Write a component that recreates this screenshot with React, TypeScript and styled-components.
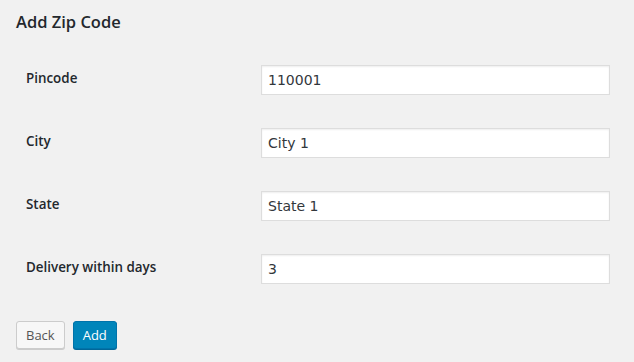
import React from 'react';
import styled, { createGlobalStyle } from 'styled-components';

const GlobalStyle = createGlobalStyle`
  html, body {
    margin: 0;
    background: #f1f1f1;
    font-family: 'Open Sans', 'DejaVu Sans', sans-serif;
    color: #23282d;
  }
`;

const fields = [
  { label: 'Pincode', value: '110001' },
  { label: 'City', value: 'City 1' },
  { label: 'State', value: 'State 1' },
  { label: 'Delivery within days', value: '3' },
];

export default function App() {
  return (
    <Wrap>
      <GlobalStyle />
      <Title>Add Zip Code</Title>
      <FormTable>
        {fields.map((f) => (
          <Row key={f.label}>
            <Label>{f.label}</Label>
            <Cell>
              <Input type='text' defaultValue={f.value} />
            </Cell>
          </Row>
        ))}
      </FormTable>
      <Actions>
        <Button>Back</Button>
        <Button primary>Add</Button>
      </Actions>
    </Wrap>
  );
}

const Wrap = styled.div`
  padding: 0 16px;
  width: 634px;
  height: 362px;
  box-sizing: border-box;
`;

const Title = styled.h1`
  margin: 0;
  padding-top: 11px;
  font-size: 16.5px;
  line-height: 22px;
  font-weight: 600;
  color: #23282d;
`;

const FormTable = styled.div`
  display: flex;
  flex-direction: column;
  margin-top: 17px;
`;

const Row = styled.div`
  display: grid;
  grid-template-columns: 245px 349px;
  height: 63px;
`;

const Label = styled.div`
  padding: 20px 0 0 10px;
  font-size: 13.4px;
  line-height: 17px;
  font-weight: 600;
  color: #23282d;
`;

const Cell = styled.div`
  padding-top: 15px;
`;

const Input = styled.input`
  display: block;
  box-sizing: border-box;
  width: 349px;
  height: 30px;
  margin: 0;
  padding: 0 6px;
  border: 1px solid #ddd;
  background: #fff;
  box-shadow: inset 0 1px 2px rgba(0, 0, 0, 0.07);
  font-family: 'DejaVu Sans', sans-serif;
  font-size: 14px;
  color: #32373c;
  outline: 0;
`;

const Actions = styled.div`
  display: flex;
  gap: 8px;
  margin-top: 19px;
`;

const Button = styled.button<{ primary?: boolean }>`
  box-sizing: border-box;
  height: 28px;
  padding: 0 9px 1px;
  border-radius: 3px;
  font-family: 'Open Sans', 'DejaVu Sans', sans-serif;
  font-size: 13px;
  line-height: 26px;
  cursor: pointer;
  border: 1px solid ${(p) => (p.primary ? '#0073aa' : '#ccc')};
  background: ${(p) => (p.primary ? '#0085ba' : '#f7f7f7')};
  color: ${(p) => (p.primary ? '#fff' : '#555')};
  box-shadow: ${(p) => (p.primary ? '0 1px 0 #006799' : '0 1px 0 #ccc')};
`;
